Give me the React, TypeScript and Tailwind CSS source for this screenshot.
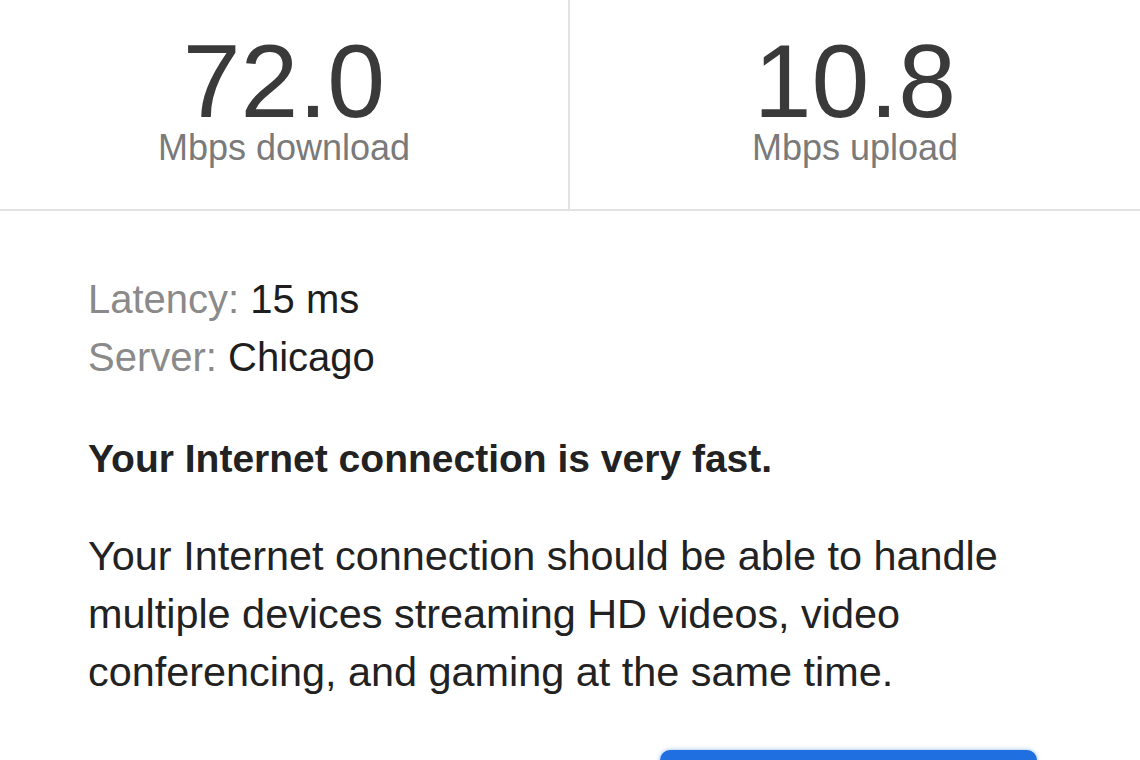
import React from "react";

function Stat({ value, label, divider }: { value: string; label: string; divider?: boolean }) {
  return (
    <div className={`flex flex-col items-center pt-[33px] ${divider ? "border-r-2 border-[#e2e2e2]" : ""}`}>
      <div className="text-[104px] leading-[96px] text-[#3a3a3a]">{value}</div>
      <div className="mt-[5px] text-[36px] leading-[28px] text-[#7a7a7a]">{label}</div>
    </div>
  );
}

export default function App() {
  return (
    <div className="w-[1140px] h-[760px] overflow-hidden bg-white font-['Liberation_Sans',Arial,sans-serif]">
      <div className="grid grid-cols-2 h-[211px] border-b-2 border-[#e2e2e2]">
        <Stat value="72.0" label="Mbps download" divider />
        <Stat value="10.8" label="Mbps upload" />
      </div>

      <div className="px-[88px] pt-[59px]">
        <div className="text-[40px] leading-[58px]">
          <div>
            <span className="text-[#8a8a8a]">Latency:</span> <span className="text-[#1e1e1e]">15 ms</span>
          </div>
          <div>
            <span className="text-[#8a8a8a]">Server:</span> <span className="text-[#1e1e1e]">Chicago</span>
          </div>
        </div>

        <p className="mt-[44px] text-[39px] leading-[58px] font-bold text-[#222]">
          Your Internet connection is very fast.
        </p>

        <p className="mt-[39px] text-[41.4px] leading-[58px] text-[#222]">
          Your Internet connection should be able to handle multiple devices streaming HD videos, video
          conferencing, and gaming at the same time.
        </p>
      </div>

      <div className="flex justify-end pr-[103px] mt-[49px]">
        <button
          aria-label="Done"
          className="w-[377px] h-[64px] rounded-[10px] bg-[#1f6fe0] shadow-[0_0_4px_rgba(31,111,224,0.5)]"
        />
      </div>
    </div>
  );
}
